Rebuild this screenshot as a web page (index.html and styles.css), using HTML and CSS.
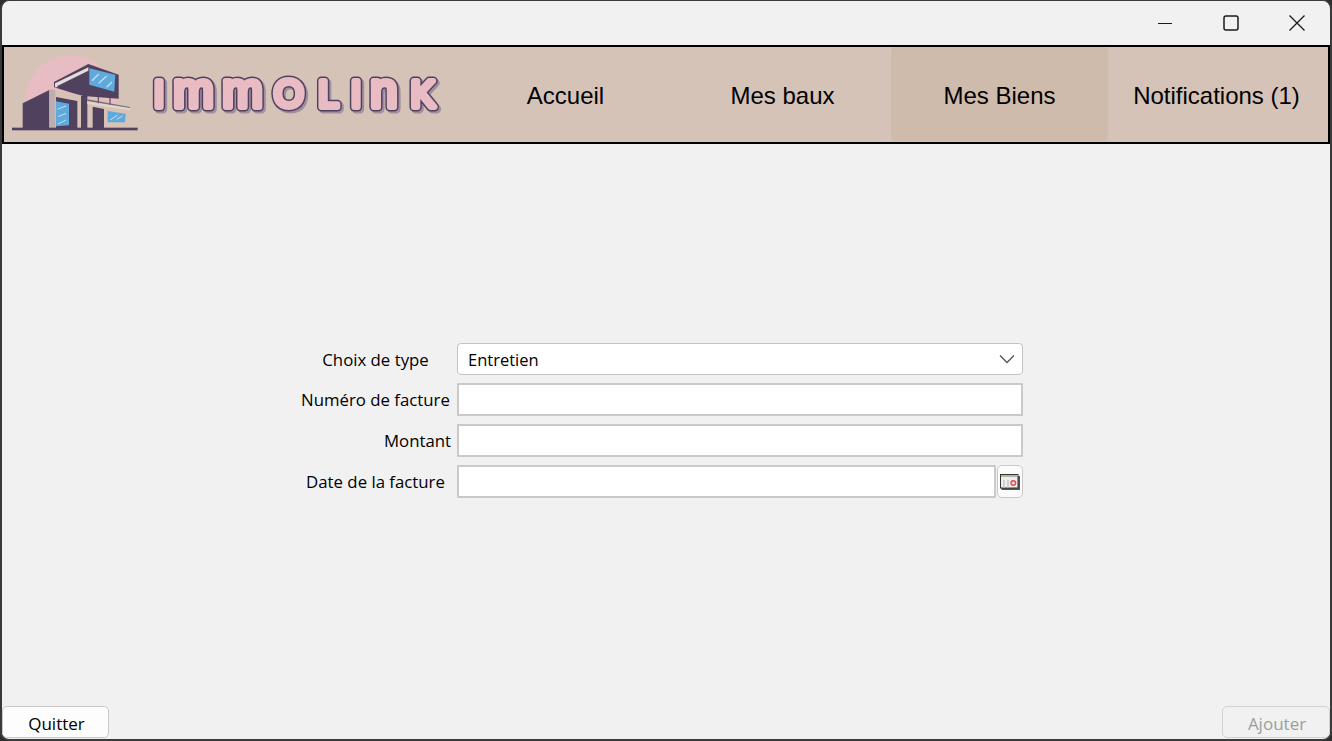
FILE: index.html
```html
<!DOCTYPE html>
<html lang="fr">
<head>
    <meta charset="UTF-8">
    <meta name="viewport" content="width=device-width, initial-scale=1.0">
    <title>Immolink</title>
    <link rel="stylesheet" href="styles.css">
</head>
<body>
    <div class="window">
        <div class="titlebar">
            <button class="win-btn" aria-label="Réduire">
                <svg width="16" height="16" viewBox="0 0 16 16"><path d="M1 8.5H15" stroke="#1a1a1a" stroke-width="1"/></svg>
            </button>
            <button class="win-btn" aria-label="Agrandir">
                <svg width="16" height="16" viewBox="0 0 16 16"><rect x="1" y="1" width="14" height="14" rx="2" fill="none" stroke="#1a1a1a" stroke-width="1.5"/></svg>
            </button>
            <button class="win-btn" aria-label="Fermer">
                <svg width="18" height="18" viewBox="0 0 18 18"><path d="M1.5 1.5L16.5 16.5M16.5 1.5L1.5 16.5" stroke="#1a1a1a" stroke-width="1.3"/></svg>
            </button>
        </div>

        <header class="header">
            <div class="logo">
                <svg class="logo-mark" width="150" height="95" viewBox="0 0 450 285">
                    <defs>
                        <clipPath id="sunClip"><rect x="0" y="0" width="450" height="180"/></clipPath>
                    </defs>
                    <circle cx="212" cy="165" r="137" fill="#e8bcc3" clip-path="url(#sunClip)"/>
                    <!-- corps du batiment -->
                    <polygon points="148,130 262,150 390,185 390,248 148,248" fill="#d6c3b6"/>
                    <polygon points="68,172 148,132 148,248 68,248" fill="#50415f"/>
                    <polygon points="148,130 166,132 166,250 148,250" fill="#bfaeae"/>
                    <polygon points="168,153 232,165 232,248 168,248" fill="#50415f"/>
                    <polygon points="168,166 207,173 207,238 168,241" fill="#5fa9dc"/>
                    <rect x="243" y="150" width="19" height="98" fill="#50415f"/>
                    <polygon points="262,165 390,186 390,193 262,174" fill="#e2d6cc"/>
                    <polygon points="262,160 390,183 390,186 262,165" fill="#7c6c80"/>
                    <polygon points="278,182 312,189 312,248 278,248" fill="#50415f"/>
                    <polygon points="323,195 377,203 375,229 323,229" fill="#5fa9dc"/>
                    <path d="M295 150V172M330 152V176" stroke="#6b5a72" stroke-width="4"/>
                    <!-- volume du haut -->
                    <polygon points="162,108 265,54 356,86 356,158 250,150 215,140 162,124" fill="#50415f"/>
                    <polygon points="165,112 265,64 265,74 172,120 172,124 165,124" fill="#e4dcd8"/>
                    <polygon points="268,67 346,86 343,137 268,116" fill="#5fa9dc"/>
                    <path d="M276 104L296 84M296 112L320 90M320 124L336 108" stroke="#c4e2f5" stroke-width="4"/>
                    <path d="M172 190L198 180M174 212L198 202M174 234L198 222M330 222L352 208M350 220L368 210" stroke="#c4e2f5" stroke-width="3"/>
                    <rect x="36" y="245" width="377" height="8" fill="#50415f"/>
                </svg>
                <svg class="logo-word" width="300" height="60" viewBox="0 0 300 60">
                    <defs>
                        <text id="logoWord" y="43"><tspan x="4">I</tspan><tspan class="low" x="23.5">M</tspan><tspan class="low" x="72.5">M</tspan><tspan class="wide" x="124">O</tspan><tspan x="168.5">L</tspan><tspan x="201">I</tspan><tspan class="low" x="220.5">N</tspan><tspan x="261">K</tspan></text>
                    </defs>
                    <use href="#logoWord" class="word-shadow" x="2" y="2"/>
                    <use href="#logoWord" class="word-outline"/>
                    <use href="#logoWord" class="word-fill"/>
                </svg>
            </div>
            <nav class="nav">
                <a class="nav-item">Accueil</a>
                <a class="nav-item">Mes baux</a>
                <a class="nav-item active">Mes Biens</a>
                <a class="nav-item">Notifications (1)</a>
            </nav>
        </header>

        <main class="content">
            <form class="form">
                <label class="field-label">Choix de type</label>
                <div class="select">
                    <span>Entretien</span>
                    <svg width="16" height="10" viewBox="0 0 16 10"><path d="M1 1.5L8 8.5L15 1.5" fill="none" stroke="#555" stroke-width="1.3"/></svg>
                </div>

                <label class="field-label">Numéro de facture</label>
                <input class="text-input" type="text">

                <label class="field-label right">Montant</label>
                <input class="text-input" type="text">

                <label class="field-label">Date de la facture</label>
                <div class="date-row">
                    <input class="text-input" type="text">
                    <button type="button" class="date-btn" aria-label="Calendrier">
                        <svg width="20" height="16" viewBox="0 0 20 16">
                            <rect x="1.5" y="2" width="18.5" height="14" fill="#555"/>
                            <rect x="0" y="0" width="18.5" height="14.5" fill="#333"/>
                            <rect x="1" y="1" width="8" height="1.5" fill="#e9b04c"/>
                            <rect x="9" y="1" width="9" height="1.5" fill="#9db8d6"/>
                            <rect x="1" y="2.5" width="16.5" height="11" fill="#eeeeee"/>
                            <path d="M4 6V13.5M8 6V13.5" stroke="#cfcfcf" stroke-width="2"/>
                            <circle cx="13.3" cy="9" r="2.3" fill="#f6dede" stroke="#e8474c" stroke-width="1.4"/>
                        </svg>
                    </button>
                </div>
            </form>
        </main>

        <footer class="footer">
            <button class="btn quit">Quitter</button>
            <button class="btn add" disabled>Ajouter</button>
        </footer>
    </div>
</body>
</html>
```

FILE: styles.css
```css
* {
    box-sizing: border-box;
}

html, body {
    margin: 0;
    height: 100%;
    overflow: hidden;
}

body {
    background-color: #2e2e2e;
    font-family: "Open Sans", "Noto Sans", sans-serif;
    color: #000000;
}

.window {
    height: 100vh;
    display: flex;
    flex-direction: column;
    background-color: #f1f1f1;
    border: 2px solid #3a3a3a;
    border-top-width: 1px;
    border-radius: 9px;
    overflow: hidden;
}

.titlebar {
    height: 44px;
    flex: none;
    display: flex;
    justify-content: flex-end;
    align-items: center;
}

.win-btn {
    width: 66px;
    height: 44px;
    padding: 0;
    border: none;
    background: none;
    display: flex;
    align-items: center;
    justify-content: center;
}

.header {
    height: 99px;
    flex: none;
    display: flex;
    align-items: stretch;
    background-color: #d6c3b7;
    border: 2px solid #000000;
}

.logo {
    width: 453px;
    flex: none;
    display: flex;
    align-items: center;
}

.logo-mark {
    flex: none;
    margin-left: -4px;
    margin-top: -2px;
    filter: blur(0.5px);
}

.logo-word {
    flex: none;
    margin-top: -2px;
    filter: blur(0.3px);
}

#logoWord {
    font-family: "Liberation Sans", sans-serif;
    font-size: 36px;
    stroke-linejoin: round;
    stroke-linecap: round;
}

#logoWord .low {
    font-size: 48px;
    text-transform: lowercase;
}

#logoWord .wide {
    font-size: 38px;
}

.word-shadow {
    fill: #a08f9f;
    stroke: #a08f9f;
    stroke-width: 9px;
}

.word-outline {
    fill: #50415f;
    stroke: #50415f;
    stroke-width: 9px;
}

.word-fill {
    fill: #e9bcc3;
    stroke: #e9bcc3;
    stroke-width: 6px;
}

.nav {
    flex: 1;
    display: grid;
    grid-template-columns: repeat(4, 217px);
}

.nav-item {
    display: flex;
    align-items: center;
    justify-content: center;
    padding-top: 2px;
    font-family: "Liberation Sans", sans-serif;
    font-size: 24px;
    color: #000000;
    border-radius: 4px;
}

.nav-item.active {
    background-color: #cfbbac;
    padding-top: 3px;
    margin-bottom: 1px;
}

.content {
    flex: 1;
    display: flex;
    align-items: center;
    padding-left: 298px;
    padding-bottom: 9px;
}

.form {
    display: grid;
    grid-template-columns: 151px 566px;
    column-gap: 6px;
    row-gap: 8px;
    align-items: center;
}

.field-label {
    font-size: 16.8px;
    text-align: center;
}

.field-label.right {
    text-align: right;
}

.select {
    height: 32px;
    display: flex;
    align-items: center;
    justify-content: space-between;
    padding: 0 7px 0 10px;
    background-color: #ffffff;
    border: 1px solid #c4c4c4;
    border-radius: 4px;
    font-size: 16.5px;
}

.text-input {
    display: block;
    width: 100%;
    height: 33px;
    background-color: #ffffff;
    border: 2px solid #c9c9c9;
    border-radius: 1px;
    outline: none;
}

.date-row {
    display: flex;
    gap: 1px;
}

.date-btn {
    width: 26px;
    height: 33px;
    flex: none;
    padding: 0;
    display: flex;
    align-items: center;
    justify-content: center;
    background-color: #fbfbfb;
    border: 1px solid #c9c9c9;
    border-radius: 5px;
}

.footer {
    flex: none;
    display: flex;
    justify-content: space-between;
    align-items: flex-start;
    height: 32px;
    margin-bottom: 1px;
}

.btn {
    width: 107px;
    height: 32px;
    padding: 2px 0 0 2px;
    font-family: "Open Sans", "Noto Sans", sans-serif;
    font-size: 17px;
    background-color: #fdfdfd;
    color: #000000;
    border: 1px solid #c8c8c8;
    border-radius: 5px;
}

.btn.add {
    width: 108px;
    background-color: #f1f1f1;
    color: #9d9d9d;
    border-color: #d2d2d2;
}
```
